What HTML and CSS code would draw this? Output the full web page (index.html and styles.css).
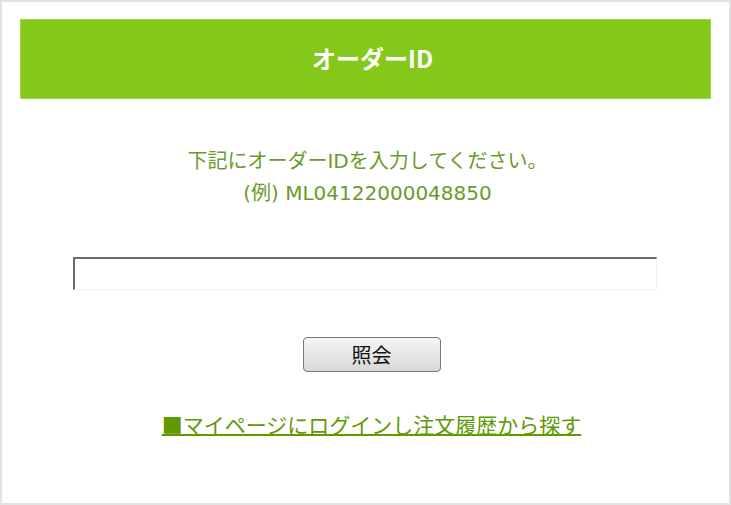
FILE: index.html
```html
<!DOCTYPE html>
<html lang="ja">
<head>
  <meta charset="UTF-8" />
  <title>オーダーID</title>
  <link rel="stylesheet" href="styles.css">
</head>
<body>
  <div class="page">
    <h1 class="title">オーダーID</h1>
    <p class="guide">下記にオーダーIDを入力してください。<br>(例) ML04122000048850</p>
    <input type="text" class="order-input" />
    <button class="search-btn">照会</button>
    <a href="#" class="history-link">■マイページにログインし注文履歴から探す</a>
  </div>
</body>
</html>
```

FILE: styles.css
```css
html, body {
  margin: 0;
  padding: 0;
  background: #ffffff;
}
.page {
  box-sizing: border-box;
  width: 731px;
  height: 505px;
  border: 2px solid #e2e2e2;
  padding: 17px 18px 0 18px;
  display: flex;
  flex-direction: column;
  align-items: center;
  font-family: "DejaVu Sans", "Noto Sans CJK JP", sans-serif;
}
.title {
  box-sizing: border-box;
  width: 100%;
  height: 80px;
  margin: 0;
  padding-left: 14px;
  background-color: #84c81a;
  border: 1px solid #9ad84a;
  color: #ffffff;
  font-family: "Noto Sans CJK JP", sans-serif;
  font-size: 24px;
  font-weight: bold;
  line-height: 76px;
  text-align: center;
}
.guide {
  margin: 46px 0 0 4px;
  color: #6c9a2a;
  font-size: 20px;
  line-height: 32px;
  text-align: center;
}
.order-input {
  box-sizing: border-box;
  width: 584px;
  height: 33px;
  margin-top: 48px;
  margin-right: 2px;
  border-style: solid;
  border-width: 2px 1px 1px 2px;
  border-color: #6a6a6a #f0f0f0 #f0f0f0 #6a6a6a;
  background: #ffffff;
}
.search-btn {
  box-sizing: border-box;
  width: 138px;
  height: 35px;
  margin-top: 47px;
  margin-left: 12px;
  border: 1px solid #7a7a7a;
  border-radius: 4px;
  background: linear-gradient(#f6f6f6, #e6e6e6 50%, #d8d8d8);
  color: #111111;
  font-family: "Noto Sans CJK JP", sans-serif;
  font-size: 20px;
  line-height: 1;
  padding: 0;
}
.history-link {
  margin-top: 38px;
  margin-left: 12px;
  color: #5e9a00;
  font-family: "Noto Sans CJK JP", sans-serif;
  font-size: 21px;
  line-height: 28px;
  text-decoration: underline;
  text-decoration-thickness: 2px;
  text-underline-offset: 1px;
}
```
